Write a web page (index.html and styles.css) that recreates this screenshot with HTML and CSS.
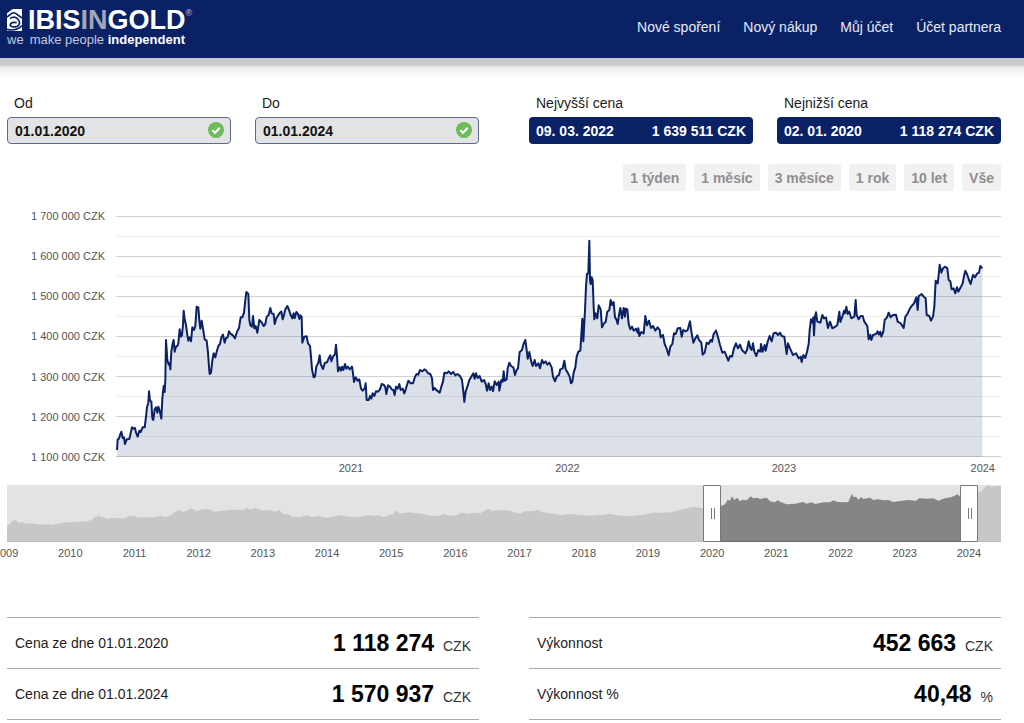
FILE: index.html
```html
<!DOCTYPE html>
<html lang="cs">
<head>
<meta charset="utf-8">
<meta name="viewport" content="width=device-width, initial-scale=1">
<title>IBISINGOLD</title>
<link rel="stylesheet" href="styles.css">
</head>
<body>
<header class="header">
  <a class="logo" href="#">
    <svg class="logo-mark" viewBox="0 0 45 66" aria-hidden="true">
      <path fill="#fff" d="M0 0h45v66H0z"/>
      <path fill="#0a2166" d="M0 0h17L0 13z"/>
      <path fill="none" stroke="#0a2166" stroke-width="5" d="M0 24 14 13Q20 9 27 14L45 27M9 29Q22 20 31 29Q41 38 36 47Q30 56 16 53Q6 50 12 43Q18 38 29 41M0 61Q28 68 45 50"/>
    </svg>
    <span class="logo-name">IBIS<span class="logo-in">IN</span>GOLD</span><span class="logo-reg">®</span>
    <span class="logo-claim"><span>we</span><span>make people <b>independent</b></span></span>
  </a>
  <nav class="nav">
    <a href="#">Nové spoření</a>
    <a href="#">Nový nákup</a>
    <a href="#">Můj účet</a>
    <a href="#">Účet partnera</a>
  </nav>
</header>
<div class="header-shade"></div>

<main class="page">
  <section class="halves">
    <div class="pair">
      <div class="field">
        <label for="from">Od</label>
        <div class="date">
          <input id="from" type="text" value="01.01.2020">
          <svg class="tick" viewBox="0 0 16 16" aria-hidden="true"><circle cx="8" cy="8" r="8" fill="#6dbb59"/><path d="M4.3 8.2 7 10.8l4.8-5" fill="none" stroke="#fff" stroke-width="2"/></svg>
        </div>
      </div>
      <div class="field">
        <label for="to">Do</label>
        <div class="date">
          <input id="to" type="text" value="01.01.2024">
          <svg class="tick" viewBox="0 0 16 16" aria-hidden="true"><circle cx="8" cy="8" r="8" fill="#6dbb59"/><path d="M4.3 8.2 7 10.8l4.8-5" fill="none" stroke="#fff" stroke-width="2"/></svg>
        </div>
      </div>
    </div>
    <div class="pair">
      <div class="field">
        <span class="caption">Nejvyšší cena</span>
        <div class="extreme"><span>09. 03. 2022</span><span>1 639 511 CZK</span></div>
      </div>
      <div class="field">
        <span class="caption">Nejnižší cena</span>
        <div class="extreme"><span>02. 01. 2020</span><span>1 118 274 CZK</span></div>
      </div>
    </div>
  </section>

  <div class="ranges">
    <button type="button">1 týden</button>
    <button type="button">1 měsíc</button>
    <button type="button">3 měsíce</button>
    <button type="button">1 rok</button>
    <button type="button">10 let</button>
    <button type="button">Vše</button>
  </div>

  <section class="chart">
    <div class="y-axis">
      <span>1 700 000 CZK</span><span>1 600 000 CZK</span><span>1 500 000 CZK</span><span>1 400 000 CZK</span><span>1 300 000 CZK</span><span>1 200 000 CZK</span><span>1 100 000 CZK</span>
    </div>
    <svg class="plot" viewBox="288 48 2655 723" preserveAspectRatio="none" role="img" aria-label="Vývoj ceny">
      <path class="grid-minor" d="M288 109.5H2943M288 229.5H2943M288 349.5H2943M288 469.5H2943M288 589.5H2943M288 709.5H2943"/>
      <path class="grid-major" d="M288 49.5H2943M288 169.5H2943M288 289.5H2943M288 409.5H2943M288 529.5H2943M288 649.5H2943M288 769.5H2943"/>
      <defs>
        <path id="price" d="M291 750 293 718 297 716 300 705 304 695 308 714 312 712 315 732 320 718 328 717 332 700 336 682 341 686 345 684 348 698 353 710 358 692 362 696 368 682 374 682 378 650 381 622 385 608 387 574 390 602 394 604 397 655 400 660 404 628 408 622 412 638 415 620 420 636 424 656 427 595 431 558 434 576 436 540 438 420 442 480 446 494 449 490 451 508 454 455 458 430 461 420 464 455 468 440 472 438 475 430 479 388 483 410 486 405 489 375 491 332 494 358 498 375 502 405 505 422 509 412 513 424 517 382 522 390 526 378 530 320 535 322 538 362 541 386 545 362 550 392 554 418 560 422 564 458 567 500 569 522 573 518 577 482 581 460 586 472 590 455 595 438 600 432 604 412 609 404 614 428 618 414 623 412 627 394 632 402 638 405 645 415 651 395 657 384 662 352 667 352 672 338 676 300 679 276 685 282 688 360 691 376 696 380 699 348 703 385 707 378 712 398 718 360 724 366 731 378 736 372 740 350 746 345 751 324 755 340 761 342 764 372 769 355 775 345 780 338 784 334 788 358 792 345 796 328 802 318 807 330 812 345 817 355 821 340 824 355 829 336 834 342 838 357 841 346 845 350 847 428 853 410 860 409 864 430 870 438 873 470 876 508 881 532 885 530 889 500 895 488 899 466 902 492 909 507 915 488 921 487 926 475 931 466 934 484 940 468 945 463 948 434 951 468 954 514 959 502 963 512 966 500 970 510 975 492 979 506 984 500 989 508 996 500 999 520 1002 546 1007 532 1013 542 1018 538 1023 566 1028 572 1034 565 1037 550 1040 600 1046 600 1050 588 1054 596 1058 580 1063 588 1068 574 1074 575 1080 568 1085 552 1092 555 1096 562 1099 582 1104 556 1110 560 1115 568 1120 570 1124 585 1128 560 1133 566 1138 552 1142 570 1148 566 1153 580 1158 565 1165 542 1172 550 1179 550 1185 530 1190 522 1195 524 1200 510 1207 514 1213 508 1219 512 1224 520 1231 522 1236 535 1239 570 1244 564 1251 572 1259 578 1264 560 1269 545 1273 518 1280 520 1286 514 1293 522 1300 516 1306 526 1313 522 1320 528 1326 540 1330 575 1333 606 1337 574 1342 560 1348 540 1354 530 1360 520 1364 536 1368 520 1373 534 1379 528 1385 545 1392 540 1397 552 1401 572 1406 550 1410 570 1415 560 1419 574 1424 544 1430 555 1436 545 1438 572 1444 540 1448 545 1451 514 1454 542 1460 538 1463 505 1468 488 1473 498 1480 502 1485 525 1489 512 1494 505 1499 456 1506 450 1511 430 1516 420 1520 450 1523 476 1528 456 1533 482 1538 498 1544 480 1548 498 1555 490 1560 505 1566 480 1571 490 1577 484 1582 494 1588 488 1595 502 1599 530 1605 544 1610 530 1617 525 1621 508 1628 505 1633 482 1637 508 1644 520 1649 530 1653 550 1657 545 1661 518 1666 502 1670 470 1675 455 1681 452 1687 356 1690 424 1695 330 1698 260 1701 222 1705 220 1708 122 1710 240 1712 252 1715 232 1718 240 1721 320 1723 358 1727 340 1732 355 1736 316 1742 328 1746 382 1752 370 1757 366 1762 335 1768 330 1772 300 1776 315 1781 306 1785 352 1789 358 1793 372 1797 345 1801 324 1806 355 1811 324 1815 350 1817 326 1822 328 1826 372 1831 388 1836 380 1841 392 1848 386 1853 398 1855 385 1858 408 1864 396 1871 400 1876 348 1881 376 1887 362 1893 384 1899 378 1906 392 1913 382 1919 390 1922 412 1929 405 1934 432 1940 446 1946 466 1951 440 1957 432 1962 400 1967 402 1973 385 1981 384 1985 410 1990 390 1997 394 2003 390 2010 364 2014 394 2020 428 2026 415 2032 406 2037 420 2044 428 2048 464 2054 458 2060 428 2066 432 2072 420 2076 425 2081 402 2088 392 2094 412 2100 435 2107 458 2114 455 2120 470 2125 482 2130 468 2136 470 2142 445 2148 430 2154 445 2160 434 2166 450 2176 460 2181 450 2186 424 2191 445 2195 450 2199 430 2203 455 2209 468 2215 450 2221 455 2223 432 2228 455 2234 435 2237 452 2243 425 2249 408 2255 424 2261 400 2268 398 2274 405 2280 398 2285 408 2293 410 2297 440 2300 462 2304 430 2310 445 2319 465 2328 460 2336 475 2342 470 2345 486 2350 465 2356 474 2361 455 2366 432 2369 390 2373 358 2377 368 2380 352 2382 406 2385 350 2388 337 2392 365 2401 368 2407 345 2412 355 2418 352 2424 384 2430 365 2437 385 2446 380 2452 375 2458 335 2461 366 2467 350 2472 332 2475 340 2479 320 2483 342 2488 335 2494 355 2503 350 2507 300 2510 345 2516 358 2522 348 2528 348 2533 365 2542 378 2546 418 2551 404 2554 420 2559 405 2568 402 2573 394 2577 404 2581 395 2584 410 2590 395 2594 360 2601 352 2606 338 2612 352 2619 345 2628 344 2633 365 2642 370 2651 384 2656 350 2662 342 2670 325 2675 318 2682 310 2689 292 2693 330 2696 288 2705 282 2711 290 2717 295 2720 345 2728 348 2733 362 2739 350 2743 320 2747 242 2753 250 2756 225 2759 194 2764 218 2769 205 2775 200 2782 205 2786 240 2791 244 2795 268 2801 265 2806 280 2811 262 2815 275 2822 262 2828 250 2832 228 2836 212 2842 225 2847 240 2852 252 2859 225 2865 232 2872 220 2877 218 2881 198 2887 205"/>
      </defs>
      <path id="area" class="area"/>
      <use class="line" href="#price"/>
    </svg>
    <div class="x-axis"><span>2021</span><span>2022</span><span>2023</span><span>2024</span></div>
  </section>

  <section class="overview">
    <div class="brush">
      <svg class="brush-plot" viewBox="21 30 2982 171" preserveAspectRatio="none" aria-hidden="true">
        <path fill="#e3e3e3" d="M21 30H3003V201H21z"/>
        <path fill="#c7c7c7" d="M21 201V152L30 146 38 138 46 135 54 141 60 144 66 140 72 145 100 146 120 149 145 148 155 150 170 147 190 143 225 141 265 138 275 134 285 127 297 121 304 127 312 125 320 132 335 129 375 130 390 122 398 125 403 121 410 128 430 127 460 127 485 122 495 127 510 122 530 108 538 104 548 111 562 107 572 100 582 104 592 108 610 102 630 103 640 110 665 108 690 104 730 104 742 98 750 104 765 99 778 103 790 107 810 105 825 110 838 104 848 116 865 118 876 125 900 127 920 121 935 126 955 123 975 128 1000 125 1020 121 1050 126 1080 126 1105 121 1122 123 1135 121 1152 127 1165 121 1180 117 1188 104 1198 116 1230 112 1250 115 1275 118 1290 123 1315 122 1332 117 1345 122 1368 121 1385 113 1405 116 1420 113 1440 115 1455 107 1465 101 1475 107 1500 105 1530 107 1545 113 1560 115 1575 109 1600 108 1615 104 1625 111 1650 115 1680 120 1710 117 1740 120 1775 122 1800 120 1830 117 1860 122 1890 123 1930 119 1960 113 1990 113 2015 112 2038 106 2060 100 2080 96 2105 99 2140 97 2165 92V201z"/>
        <path fill="#858585" d="M2150 201V93L2165 92 2175 88 2183 74 2190 77 2196 64 2203 75 2212 68 2220 79 2228 74 2240 76 2252 64 2260 70 2272 68 2280 72 2300 68 2310 79 2325 82 2333 76 2342 81 2360 88 2385 86 2410 81 2420 86 2435 82 2445 87 2470 82 2490 82 2500 76 2510 80 2525 82 2545 81 2552 65 2556 56 2561 67 2568 65 2575 74 2583 66 2590 72 2610 68 2620 75 2635 73 2650 76 2665 75 2680 81 2700 78 2725 75 2748 77 2758 70 2780 71 2800 70 2815 77 2835 70 2845 68 2855 66 2862 63 2872 58 2882 66V201z"/>
        <path fill="#c7c7c7" d="M2895 201V62L2932 54 2945 48 2955 37 2962 29 2975 36 2988 33 3003 34V201z"/>
        <path fill="#bdbdbd" d="M21 198H3003V201H21z"/>
        <path fill="#6a6a6a" d="M2150 198H2890V201H2150z"/>
      </svg>
      <input class="handle" type="range" min="0" max="1000" value="713" aria-label="Začátek období">
      <input class="handle" type="range" min="0" max="1000" value="976" aria-label="Konec období">
    </div>
    <div class="years"><span>2009</span><span>2010</span><span>2011</span><span>2012</span><span>2013</span><span>2014</span><span>2015</span><span>2016</span><span>2017</span><span>2018</span><span>2019</span><span>2020</span><span>2021</span><span>2022</span><span>2023</span><span>2024</span></div>
  </section>

  <section class="halves">
    <table class="stats">
      <tr><th scope="row">Cena ze dne 01.01.2020</th><td><b>1 118 274</b> <span>CZK</span></td></tr>
      <tr><th scope="row">Cena ze dne 01.01.2024</th><td><b>1 570 937</b> <span>CZK</span></td></tr>
    </table>
    <table class="stats">
      <tr><th scope="row">Výkonnost</th><td><b>452 663</b> <span>CZK</span></td></tr>
      <tr><th scope="row">Výkonnost %</th><td><b>40,48</b> <span>%</span></td></tr>
    </table>
  </section>
</main>
<script src="chart.js"></script>
</body>
</html>
```
FILE: chart.js
```js
// Close the price line down to the baseline to get the filled area.
var line = document.getElementById('price').getAttribute('d');
document.getElementById('area').setAttribute('d', line + 'V771H291z');
```
FILE: styles.css
```css
* { box-sizing: border-box; }
body {
  margin: 0;
  overflow-x: hidden;
  background: #fff;
  color: #1c1c1c;
  font-family: "Liberation Sans", Arial, sans-serif;
  font-size: 14px;
  line-height: 16px;
}
.header {
  display: flex;
  justify-content: space-between;
  align-items: flex-start;
  height: 58px;
  padding: 7px 23px 0 7px;
  background: #0a2166;
}
.logo {
  display: grid;
  grid-template-columns: 15px auto auto;
  column-gap: 6px;
  color: #fff;
  text-decoration: none;
}
.logo-mark { width: 15px; height: 22px; margin-top: 2px; }
.logo-name {
  font-size: 27px;
  font-weight: bold;
  line-height: 26px;
}
.logo-in { color: #a3a6b5; }
.logo-reg { margin: 2px 0 0 -6px; font-size: 9px; line-height: 9px; color: #c3c9dc; }
.logo-claim {
  grid-column: 1 / -1;
  display: flex;
  gap: 6px;
  font-size: 13px;
  line-height: 13px;
  color: #c3c9dc;
}
.logo-claim b { color: #fff; }
.nav { display: flex; gap: 23px; padding-top: 12px; }
.nav a { color: #e8ebf5; text-decoration: none; }
.header-shade {
  height: 20px;
  background: linear-gradient(#c6c7c8 0, #cacbcb 7px, #ececec 9px, #fff 100%);
}
.page { padding: 17px 23px 0 7px; }
.halves { display: grid; grid-template-columns: 1fr 1fr; column-gap: 50px; }
.pair { display: grid; grid-template-columns: 1fr 1fr; column-gap: 24px; }
.field { display: flex; flex-direction: column; gap: 6px; }
.field label, .caption { padding-left: 7px; }
.date { position: relative; }
.date input {
  display: block;
  width: 100%;
  height: 27px;
  padding: 0 7px;
  border: 1px solid #5c6894;
  border-radius: 4px;
  background: #e3e3e5;
  color: #111;
  font: bold 14px "Liberation Sans", Arial, sans-serif;
}
.tick { position: absolute; right: 7px; top: 5px; width: 16px; height: 16px; }
.extreme {
  display: flex;
  justify-content: space-between;
  align-items: center;
  height: 27px;
  padding: 0 7px;
  border-radius: 4px;
  background: #0a2166;
  color: #fff;
  font-weight: bold;
}
.ranges { display: flex; justify-content: flex-end; gap: 8px; margin-top: 20px; }
.ranges button {
  height: 27px;
  padding: 0 7px;
  border: 0;
  border-radius: 3px;
  background: #f1f1f1;
  color: #8f8f8f;
  font: bold 14px "Liberation Sans", Arial, sans-serif;
}
.chart {
  display: grid;
  grid-template-columns: 98px 1fr;
  column-gap: 11px;
  margin-top: 25px;
  font-size: 11px;
  line-height: 12px;
  color: #555;
}
.y-axis {
  display: flex;
  flex-direction: column;
  justify-content: space-between;
  height: 253px;
  margin: -6px 0;
  text-align: right;
}
.plot { display: block; width: 100%; height: 241px; overflow: visible; }
.plot path, .plot use { vector-effect: non-scaling-stroke; }
.grid-minor { stroke: #ededed; }
.grid-major { stroke: #d2d2d2; }
.area { fill: #0a2166; fill-opacity: 0.14; }
.line { fill: none; stroke: #0a2166; stroke-width: 2px; stroke-linejoin: round; }
.x-axis {
  grid-column: 2;
  display: grid;
  grid-template-columns: 127fr 216fr 217fr 216fr 109fr;
  margin-top: 5px;
  text-align: center;
}
.x-axis span:first-child { grid-column: 2; }
.x-axis span:last-child { padding-right: 6px; text-align: right; }
.overview { margin-top: 11px; font-size: 11px; line-height: 12px; color: #555; }
.brush { position: relative; height: 57px; }
.brush-plot { display: block; width: 100%; height: 57px; }
.handle {
  position: absolute;
  inset: 0;
  width: 100%;
  height: 57px;
  margin: 0;
  appearance: none;
  background: none;
  pointer-events: none;
}
.handle::-webkit-slider-thumb {
  appearance: none;
  width: 18px;
  height: 57px;
  border: 1px solid #777;
  border-radius: 1px;
  background:
    linear-gradient(#777, #777) 7px 22px / 1px 11px no-repeat,
    linear-gradient(#777, #777) 10px 22px / 1px 11px no-repeat,
    #fff;
  pointer-events: auto;
}
.years {
  display: grid;
  grid-template-columns: repeat(16, 1fr);
  margin: 5px 0 0 -33px;
  text-align: center;
}
.overview + .halves { margin-top: 58px; }
.stats { width: 100%; border-collapse: collapse; border-top: 1px solid #aaa; }
.stats tr { height: 51px; border-bottom: 1px solid #aaa; }
.stats th { padding: 0 8px; font-weight: normal; text-align: left; }
.stats td { padding: 0 8px; text-align: right; white-space: nowrap; color: #333; }
.stats b { margin-right: 5px; font-size: 23px; line-height: 28px; color: #000; }
```
